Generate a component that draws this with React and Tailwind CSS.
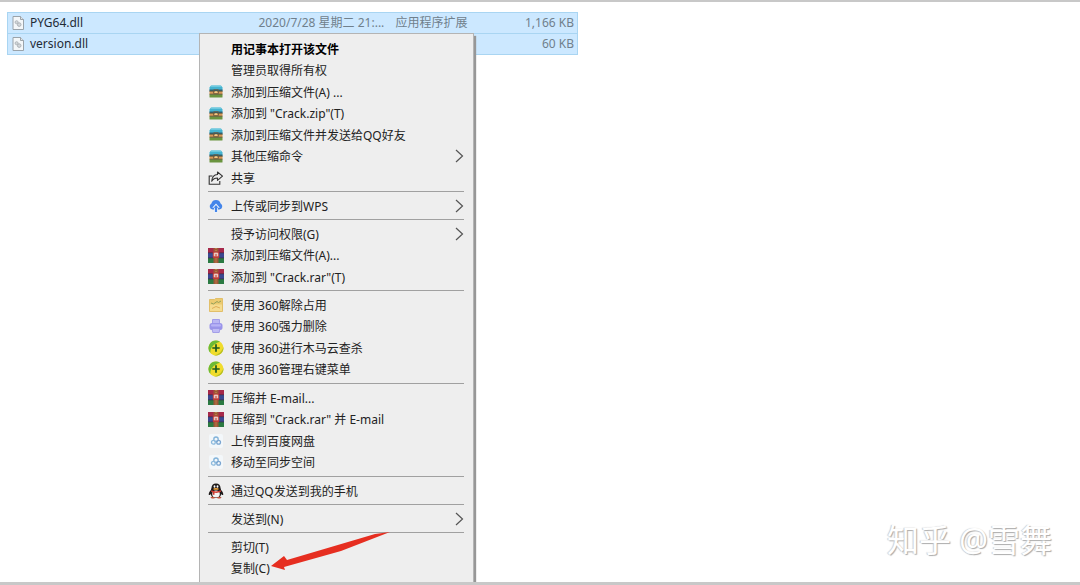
import React from "react";

const DllIcon = () => (
  <svg width="12" height="14" viewBox="0 0 12 14" className="shrink-0">
    <path d="M1 .5h7.5l3 3v10H1z" fill="#f4f7f9" stroke="#9aa3aa" />
    <path d="M8.5.5v3h3" fill="#dfe6ea" stroke="#8b9298" strokeWidth=".8" />
    <circle cx="4.6" cy="6.2" r="1.5" fill="#d3d7da" stroke="#b3b8bc" />
    <circle cx="7.2" cy="8.6" r="1.8" fill="#d3d7da" stroke="#adb2b7" />
  </svg>
);

const ZipIcon = () => (
  <svg width="14" height="13" viewBox="0 0 14 13">
    <path d="M2 .5h10L13.500 2.500v3H.5v-3z" fill="#45b3d0" />
    <path d="M2.500.5h9l.8 1.200H1.700z" fill="#7dd0e4" />
    <rect x=".5" y="4.500" width="13" height="2" fill="#2d6478" />
    <rect x=".5" y="6.200" width="13" height="3" fill="#d99a58" />
    <rect x=".5" y="9.200" width="13" height="3.300" rx=".5" fill="#6a943f" />
    <path d="M.5 6.200h13M.5 9.200h13" stroke="#57492f" strokeWidth=".8" />
    <rect x="4.500" y="4.700" width="5" height="4" rx=".5" fill="none" stroke="#6b5a40" strokeWidth=".8" />
    <rect x="5.800" y="6.300" width="2.400" height="1.600" fill="#f3cf8a" />
  </svg>
);

const ShareIcon = () => (
  <svg width="16" height="14" viewBox="0 0 16 14" fill="none" stroke="#333" strokeWidth="1.1">
    <path d="M4.500 5H1.200v8.300h10.600V10" />
    <path d="M9.500 1l5 4.200-5 4.200V7C6.700 7 5 8 3.700 10.200 4 6.200 6 3.700 9.500 3.500z" strokeLinejoin="round" />
  </svg>
);

const WpsIcon = () => (
  <svg width="14" height="14" viewBox="0 0 14 14">
    <path d="M3.600 10.500A3.200 3.200 0 0 1 2.400 4.500 4.800 4.800 0 0 1 11.600 4.500 3.200 3.200 0 0 1 10.400 10.500z" fill="#4485ea" />
    <path d="M7 4.500l3.800 4.300H8.900v4.700H5.100V8.800H3.200z" fill="#eef4fd" />
    <path d="M7 6l2.400 2.800H8.100v4.200H5.900V8.800H4.600z" fill="#4485ea" />
  </svg>
);

const RarIcon = () => (
  <svg width="16" height="15" viewBox="0 0 16 15">
    <rect width="16" height="5" fill="#a6284a" />
    <rect y="5" width="16" height="5" fill="#3b4890" />
    <rect y="10" width="16" height="5" fill="#2b7a42" />
    <path d="M0 4.800h16M0 9.900h16" stroke="#3a2b48" strokeWidth=".7" />
    <rect x="5.500" width="5" height="15" fill="#9d5838" />
    <rect x="4.800" y="3.800" width="6.400" height="6.200" rx=".8" fill="#c03b38" />
    <path d="M6.300 8.300V5.200h3.400v3.100" fill="none" stroke="#f4eadf" />
    <path d="M8 5v3.500" stroke="#f4eadf" strokeWidth=".8" />
    <path d="M8 10.500V15M8 0v3.500" stroke="#d19b53" strokeDasharray="1 1" />
  </svg>
);

const UnlockIcon = () => (
  <svg width="14" height="14" viewBox="0 0 14 14">
    <path d="M.500 1.500h5l1-1h7v13H.500z" fill="#eccb70" stroke="#e2bf69" />
    <path d="M1 6.500h12V13H1z" fill="#f5dc90" />
    <path d="M2 5l2.500 1L8 3.500l1.500 1L12 3" stroke="#93a05a" fill="none" />
    <path d="M3 10.500l4-2 4 1.500" stroke="#dfae58" fill="none" />
  </svg>
);

const ShredIcon = () => (
  <svg width="14" height="14" viewBox="0 0 14 14">
    <path d="M3.500.500h7V6h-7z" fill="#bab6f3" stroke="#a19cea" />
    <rect x=".5" y="4" width="13" height="7" rx="2.500" fill="#9a94ea" />
    <rect x="2" y="5.200" width="10" height="2.200" rx="1" fill="#b8b3f6" />
    <path d="M3 9.500h8l-.8 4H3.800z" fill="#bfbbf5" stroke="#9791e4" strokeWidth=".8" />
  </svg>
);

const PlusBallIcon = () => (
  <svg width="16" height="16" viewBox="0 0 16 16">
    <circle cx="8" cy="8" r="7.500" fill="#f0dc2c" />
    <path d="M8 .5a7.500 7.500 0 0 0-5.500 12.600C1.800 9 4.500 4 12 1.700A7.500 7.500 0 0 0 8 .5z" fill="#6cbb35" />
    <path d="M15.400 7A7.500 7.500 0 0 1 6 15.200C10.500 14.800 14 11.500 15.400 7z" fill="#b3bf25" />
    <path d="M8 4.300v7.400M4.300 8h7.400" stroke="#1d5b22" strokeWidth="1.700" />
  </svg>
);

const BaiduIcon = () => (
  <svg width="14" height="14" viewBox="0 0 14 14">
    <rect width="14" height="14" rx="2" fill="#f3f7fa" />
    <g fill="none" strokeWidth="1.300">
      <circle cx="7" cy="5.200" r="2.200" stroke="#83b3da" />
      <circle cx="4.400" cy="8.200" r="1.900" stroke="#8dbadd" />
      <circle cx="9.600" cy="8.200" r="1.900" stroke="#7ba6d1" />
    </g>
  </svg>
);

const QQIcon = () => (
  <svg width="16" height="16" viewBox="0 0 16 16">
    <path d="M8 .5c-3 0-4.500 2-4.500 4.300L2.900 7C1.300 8.800.500 10.500.800 12c.6.400 1.500-.3 2-1 .5 3 2.500 4 5.200 4s4.700-1 5.200-4c.5.700 1.400 1.400 2 1 .3-1.500-.5-3.200-2.100-5l-.6-2.200C12.500 2.500 11 .5 8 .5z" fill="#1d1919" />
    <ellipse cx="8" cy="11" rx="3.800" ry="3.600" fill="#f7f4f2" />
    <ellipse cx="6.500" cy="3.500" rx=".9" ry="1.300" fill="#fff" />
    <ellipse cx="9.500" cy="3.500" rx=".9" ry="1.300" fill="#fff" />
    <ellipse cx="8" cy="5.900" rx="2.800" ry=".9" fill="#efa33a" />
    <path d="M3.300 7.300c3.200 1.500 6.200 1.500 9.400 0l.3 1.500c-2 1-4.300 1.300-6.500 1v2H4.800V9.300l-1.700-.5z" fill="#d0392f" />
    <path d="M2.500 14.200c1.400-1 3.500-.5 5 .5-1 1-4.800 1.200-5-.5zM13.500 14.200c-1.400-1-3.500-.5-5 .5 1 1 4.800 1.200 5-.5z" fill="#c4523a" />
  </svg>
);

const Chevron = () => (
  <svg width="9" height="14" viewBox="0 0 9 14" fill="none" stroke="#555" strokeWidth="1.200" className="ml-auto">
    <path d="M1 1l6.500 6L1 13" />
  </svg>
);

const files = [
  { name: "PYG64.dll", date: "2020/7/28 星期二 21:...", type: "应用程序扩展", size: "1,166 KB" },
  { name: "version.dll", date: "", type: "", size: "60 KB" },
];

const groups = [
  [
    { label: "用记事本打开该文件", bold: true },
    { label: "管理员取得所有权" },
    { label: "添加到压缩文件(A) ...", icon: ZipIcon },
    { label: '添加到 "Crack.zip"(T)', icon: ZipIcon },
    { label: "添加到压缩文件并发送给QQ好友", icon: ZipIcon },
    { label: "其他压缩命令", icon: ZipIcon, sub: true },
    { label: "共享", icon: ShareIcon },
  ],
  [{ label: "上传或同步到WPS", icon: WpsIcon, sub: true }],
  [
    { label: "授予访问权限(G)", sub: true },
    { label: "添加到压缩文件(A)...", icon: RarIcon },
    { label: '添加到 "Crack.rar"(T)', icon: RarIcon },
  ],
  [
    { label: "使用 360解除占用", icon: UnlockIcon },
    { label: "使用 360强力删除", icon: ShredIcon },
    { label: "使用 360进行木马云查杀", icon: PlusBallIcon },
    { label: "使用 360管理右键菜单", icon: PlusBallIcon },
  ],
  [
    { label: "压缩并 E-mail...", icon: RarIcon },
    { label: '压缩到 "Crack.rar" 并 E-mail', icon: RarIcon },
    { label: "上传到百度网盘", icon: BaiduIcon },
    { label: "移动至同步空间", icon: BaiduIcon },
  ],
  [{ label: "通过QQ发送到我的手机", icon: QQIcon }],
  [{ label: "发送到(N)", sub: true }],
  [{ label: "剪切(T)" }, { label: "复制(C)" }],
];

const MenuItem = ({ label, icon: Icon, bold, sub }) => (
  <button
    type="button"
    role="menuitem"
    className="flex w-full items-center text-left whitespace-nowrap odd:h-[21px] even:h-[22px] hover:bg-white"
  >
    <span className="mr-[7px] flex w-4 shrink-0 justify-center">{Icon && <Icon />}</span>
    <span className={bold ? "pt-[2px] font-bold text-black" : "pt-[2px]"}>{label}</span>
    {sub && <Chevron />}
  </button>
);

const ContextMenu = () => (
  <div
    role="menu"
    className="absolute top-[31px] left-[199px] w-[275px] border border-b-0 border-[#b4b4b4] bg-[#eeeeee] pt-1 pr-[9px] pl-2 text-[#222] shadow-[2px_3px_1px_#979797]"
  >
    {groups.map((items, i) => (
      <React.Fragment key={i}>
        {i > 0 && <hr className="my-[3px] border-[#a0a0a0]" />}
        <div>
          {items.map((item) => (
            <MenuItem key={item.label} {...item} />
          ))}
        </div>
      </React.Fragment>
    ))}
    <div className="h-2" />
    {/* arrow pointing at the copy entry */}
    <svg
      width="120"
      height="40"
      viewBox="0 0 120 40"
      className="pointer-events-none absolute bottom-4 left-[71px]"
    >
      <path d="M119 1L104 3 16 29 13 25 0 35 14 39 13 36 70 20z" fill="#e62e20" />
    </svg>
  </div>
);

const App = () => {
  return (
    <div className="flex h-screen flex-col overflow-hidden border-t-2 border-b-3 border-[#c8c8c8] bg-white font-['Noto_Sans','Noto_Sans_CJK_SC',sans-serif] text-[12px] leading-4">
      <main className="relative min-h-0 flex-1 px-[7px] pt-[10px]">
        <table className="w-[571px] table-fixed border-collapse text-[#70808c]">
          <tbody>
            {files.map((f) => (
              <tr key={f.name} className="h-[21px] border border-[#a9d5f2] bg-[#cce8ff]">
                <td className="w-[251px] p-0 pl-1">
                  <span className="flex items-center gap-[6px] text-[#1f2b36]">
                    <DllIcon />
                    {f.name}
                  </span>
                </td>
                <td className="w-[137px] p-0 whitespace-nowrap">{f.date}</td>
                <td className="p-0 whitespace-nowrap">{f.type}</td>
                <td className="w-20 p-0 pr-[3px] text-right">{f.size}</td>
              </tr>
            ))}
          </tbody>
        </table>
        <ContextMenu />
        <p className="absolute right-7 bottom-6 text-[32px] leading-[36px] text-white [text-shadow:-1px_0_1px_#ccc,1px_1px_1px_#aaa]">
          知乎 @雪舞
        </p>
      </main>
    </div>
  );
};

export default App;
